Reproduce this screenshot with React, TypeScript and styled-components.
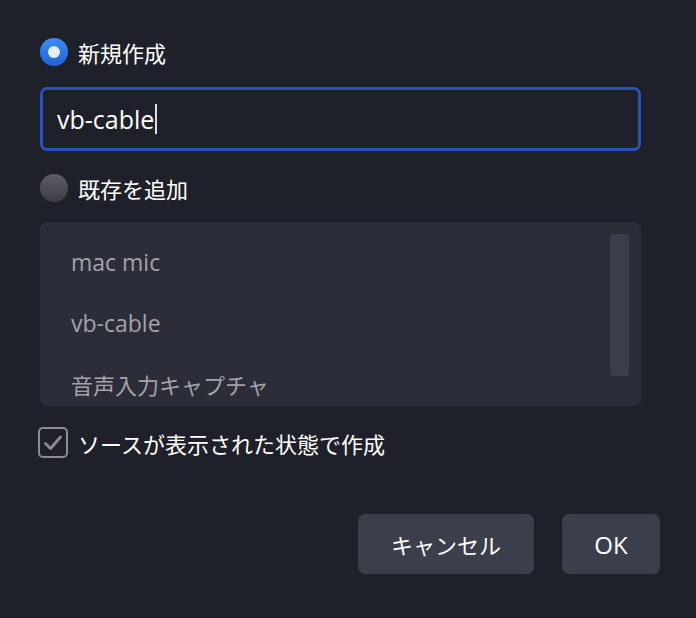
import React from "react";
import styled, { createGlobalStyle } from "styled-components";

const Global = createGlobalStyle`
  html, body { margin: 0; padding: 0; background: #1f212a; }
  body { font-family: "Open Sans", "Noto Sans CJK JP", sans-serif; }
`;

const Dialog = styled.div`
  width: 696px;
  height: 618px;
  box-sizing: border-box;
  padding: 38px 55px 0 38px;
  background: #1f212a;
  display: flex;
  flex-direction: column;
  color: #fff;
`;

const RadioRow = styled.label<{ $mt?: number }>`
  display: flex;
  align-items: center;
  gap: 10px;
  height: 28px;
  margin-top: ${(p) => p.$mt ?? 0}px;
  margin-left: 2px;
  font-size: 22px;
  color: #fff;
`;

const RadioDot = styled.span<{ $on?: boolean }>`
  width: 28px;
  height: 28px;
  flex: none;
  border-radius: 50%;
  box-sizing: border-box;
  display: flex;
  align-items: center;
  justify-content: center;
  background: ${(p) =>
    p.$on
      ? "linear-gradient(#3a8ef0, #2261d6)"
      : "linear-gradient(#5d5e66, #3b3c44)"};
  &::after {
    content: "";
    display: ${(p) => (p.$on ? "block" : "none")};
    width: 12px;
    height: 12px;
    border-radius: 50%;
    background: #e6ecf7;
  }
`;

const Input = styled.div`
  margin-top: 21px;
  margin-left: 2px;
  height: 64px;
  box-sizing: border-box;
  border: 3px solid #2c4fbe;
  border-radius: 7px;
  display: flex;
  align-items: center;
  padding-left: 14px;
  font-size: 25px;
  color: #fff;
`;

const Caret = styled.span`
  display: inline-block;
  width: 1.5px;
  height: 30px;
  background: #ddd;
  margin-left: 1px;
`;

const List = styled.div`
  margin-top: 20px;
  margin-left: 2px;
  height: 184px;
  border-radius: 7px;
  background: #2b2d39;
  position: relative;
  overflow: hidden;
  box-sizing: border-box;
  padding: 9px 0 0 31px;
`;

const Item = styled.div<{ $size: number }>`
  height: 61px;
  display: flex;
  align-items: center;
  font-size: ${(p) => p.$size}px;
  color: #a3a3a8;
`;

const Scroll = styled.div`
  position: absolute;
  right: 12px;
  top: 12px;
  width: 19px;
  height: 142px;
  border-radius: 4px;
  background: #3b3e4a;
`;

const CheckRow = styled.label`
  display: flex;
  align-items: center;
  gap: 10px;
  margin-top: 21px;
  height: 31px;
  font-size: 22px;
  color: #fff;
`;

const CheckBox = styled.span`
  width: 30px;
  height: 31px;
  flex: none;
  box-sizing: border-box;
  border: 2px solid #8c8c92;
  border-radius: 5px;
  display: flex;
  align-items: center;
  justify-content: center;
`;

const Buttons = styled.div`
  display: flex;
  justify-content: flex-end;
  gap: 28px;
  margin-top: 56px;
  margin-right: -19px;
`;

const Button = styled.button<{ $w: number; $size: number }>`
  width: ${(p) => p.$w}px;
  height: 60px;
  border: none;
  border-radius: 7px;
  background: #3b3e4b;
  color: #fff;
  font-family: "Open Sans", "Noto Sans CJK JP", sans-serif;
  font-size: ${(p) => p.$size}px;
  padding: 0;
`;

export default function App() {
  return (
    <>
      <Global />
      <Dialog>
        <RadioRow>
          <RadioDot $on />
          新規作成
        </RadioRow>
        <Input>
          vb-cable
          <Caret />
        </Input>
        <RadioRow $mt={23}>
          <RadioDot />
          既存を追加
        </RadioRow>
        <List>
          <Item $size={23}>mac mic</Item>
          <Item $size={23}>vb-cable</Item>
          <Item $size={22}>音声入力キャプチャ</Item>
          <Scroll />
        </List>
        <CheckRow>
          <CheckBox>
            <svg width="20" height="18" viewBox="0 0 20 18">
              <path d="M2.5 9.5 L7.5 14.5 L17.5 3" fill="none" stroke="#8c8c92" strokeWidth="2.8" strokeLinecap="round" strokeLinejoin="round" />
            </svg>
          </CheckBox>
          ソースが表示された状態で作成
        </CheckRow>
        <Buttons>
          <Button $w={176} $size={22}>キャンセル</Button>
          <Button $w={98} $size={24}>OK</Button>
        </Buttons>
      </Dialog>
    </>
  );
}
